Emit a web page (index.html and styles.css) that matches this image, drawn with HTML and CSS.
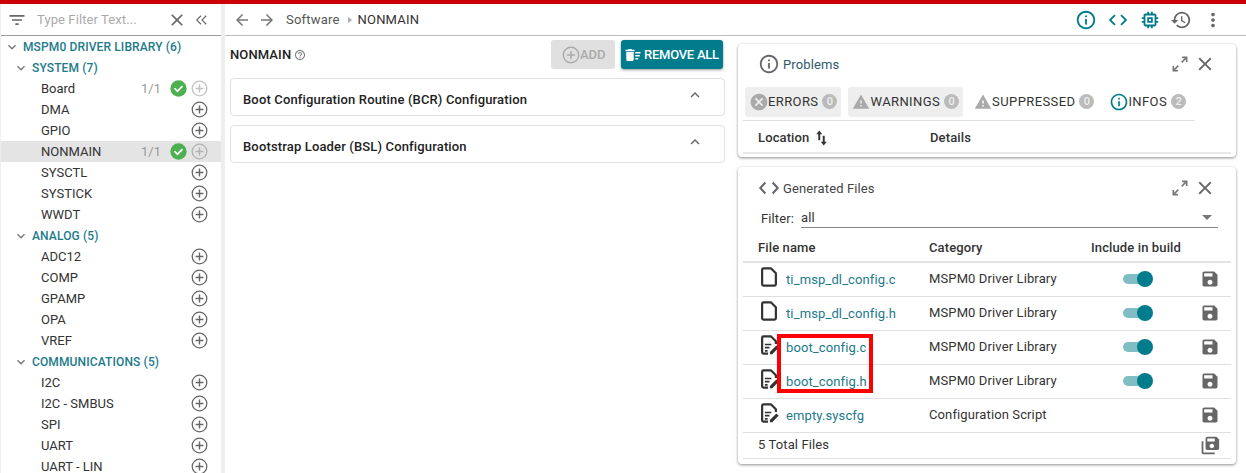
FILE: index.html
```html
<!DOCTYPE html>
<html lang="en">

<head>
    <meta charset="UTF-8">
    <title>SysConfig - NONMAIN</title>
    <link rel="stylesheet" href="styles.css">
</head>

<body>
    <svg class="defs" width="0" height="0">
        <symbol id="i-filter" viewBox="0 0 24 24"><path d="M10 18h4v-2h-4v2zM3 6v2h18V6H3zm3 7h12v-2H6v2z"/></symbol>
        <symbol id="i-close" viewBox="0 0 24 24"><path d="M19 6.41L17.59 5 12 10.59 6.41 5 5 6.41 10.59 12 5 17.59 6.41 19 12 13.41 17.59 19 19 17.59 13.41 12z"/></symbol>
        <symbol id="i-dleft" viewBox="0 0 24 24"><path d="M11 5.4L9.6 4 1.6 12l8 8 1.4-1.4L4.4 12zM20 5.4L18.6 4l-8 8 8 8 1.4-1.4L13.400 12z"/></symbol>
        <symbol id="i-more" viewBox="0 0 24 24"><path d="M16.59 8.59L12 13.17 7.41 8.59 6 10l6 6 6-6z"/></symbol>
        <symbol id="i-less" viewBox="0 0 24 24"><path d="M12 8l-6 6 1.41 1.41L12 10.83l4.59 4.58L18 14z"/></symbol>
        <symbol id="i-back" viewBox="0 0 24 24"><path d="M20 11H7.83l5.59-5.59L12 4l-8 8 8 8 1.41-1.41L7.83 13H20v-2z"/></symbol>
        <symbol id="i-fwd" viewBox="0 0 24 24"><path d="M12 4l-1.41 1.41L16.17 11H4v2h12.17l-5.58 5.59L12 20l8-8z"/></symbol>
        <symbol id="i-info" viewBox="0 0 24 24"><path d="M11 7h2v2h-2zm0 4h2v6h-2zm1-9C6.48 2 2 6.48 2 12s4.48 10 10 10 10-4.48 10-10S17.52 2 12 2zm0 18c-4.41 0-8-3.59-8-8s3.59-8 8-8 8 3.59 8 8-3.59 8-8 8z"/></symbol>
        <symbol id="i-code" viewBox="0 0 24 24"><path d="M9.4 16.6L4.800 12l4.600-4.600L8 6l-6 6 6 6 1.400-1.400zm5.200 0l4.600-4.600-4.600-4.600L16 6l6 6-6 6-1.400-1.400z"/></symbol>
        <symbol id="i-code2" viewBox="0 0 24 24"><path d="M8 6l-5.500 6L8 18M16 6l5.500 6L16 18" fill="none" stroke="currentColor" stroke-width="2.200"/></symbol>
        <symbol id="i-chip" viewBox="0 0 24 24"><path d="M15 9H9v6h6V9zm-2 4h-2v-2h2v2zm8-2V9h-2V7c0-1.100-.9-2-2-2h-2V3h-2v2h-2V3H9v2H7c-1.100 0-2 .9-2 2v2H3v2h2v2H3v2h2v2c0 1.100.9 2 2 2h2v2h2v-2h2v2h2v-2h2c1.100 0 2-.9 2-2v-2h2v-2h-2v-2h2zm-4 6H7V7h10v10z"/></symbol>
        <symbol id="i-history" viewBox="0 0 24 24"><path d="M13 3c-4.970 0-9 4.030-9 9H1l3.890 3.890.07.14L9 12H6c0-3.870 3.130-7 7-7s7 3.130 7 7-3.130 7-7 7c-1.930 0-3.680-.79-4.940-2.060l-1.420 1.420C8.270 19.990 10.510 21 13 21c4.970 0 9-4.030 9-9s-4.030-9-9-9zm-1 5v5l4.280 2.540.72-1.210-3.500-2.080V8H12z"/></symbol>
        <symbol id="i-dots" viewBox="0 0 24 24"><path d="M12 8c1.100 0 2-.9 2-2s-.9-2-2-2-2 .9-2 2 .9 2 2 2zm0 2c-1.100 0-2 .9-2 2s.9 2 2 2 2-.9 2-2-.9-2-2-2zm0 6c-1.100 0-2 .9-2 2s.9 2 2 2 2-.9 2-2-.9-2-2-2z"/></symbol>
        <symbol id="i-warn" viewBox="0 0 24 24"><path d="M1 21h22L12 2 1 21zm12-3h-2v-2h2v2zm0-4h-2v-4h2v4z"/></symbol>
        <symbol id="i-cancel" viewBox="0 0 24 24"><path d="M12 2C6.470 2 2 6.470 2 12s4.470 10 10 10 10-4.470 10-10S17.530 2 12 2zm5 13.590L15.590 17 12 13.410 8.410 17 7 15.590 10.590 12 7 8.410 8.410 7 12 10.590 15.590 7 17 8.410 13.410 12 17 15.590z"/></symbol>
        <symbol id="i-save" viewBox="0 0 24 24"><path d="M17 3H5c-1.110 0-2 .9-2 2v14c0 1.100.89 2 2 2h14c1.100 0 2-.9 2-2V7l-4-4zm-5 16c-1.660 0-3-1.340-3-3s1.340-3 3-3 3 1.340 3 3-1.340 3-3 3zm3-10H5V5h10v4z"/></symbol>
        <symbol id="i-saveall" viewBox="0 0 24 24"><path d="M20 2H9.500C8.400 2 7.500 2.900 7.500 4v11c0 1.100.9 2 2 2H21c1.100 0 2-.9 2-2V5l-3-3zm-5.300 13c-1.500 0-2.600-1.100-2.600-2.500s1.100-2.500 2.600-2.500 2.600 1.100 2.600 2.500-1.100 2.500-2.600 2.500zM18 7.500H9.500V4H18v3.500zM3 7v13c0 1.100.9 2 2 2h13v-2H5V7H3z"/></symbol>
        <symbol id="i-help" viewBox="0 0 24 24"><path d="M11 18h2v-2h-2v2zm1-16C6.480 2 2 6.480 2 12s4.480 10 10 10 10-4.480 10-10S17.520 2 12 2zm0 18c-4.410 0-8-3.590-8-8s3.590-8 8-8 8 3.590 8 8-3.590 8-8 8zm0-14c-2.210 0-4 1.790-4 4h2c0-1.100.9-2 2-2s2 .9 2 2c0 2-3 1.750-3 5h2c0-2.250 3-2.500 3-5 0-2.210-1.790-4-4-4z"/></symbol>
        <symbol id="i-sweep" viewBox="0 0 24 24"><path d="M15 16h4v2h-4zm0-8h7v2h-7zm0 4h6v2h-6zM3 18c0 1.100.9 2 2 2h6c1.100 0 2-.9 2-2V8H3v10zM14 5h-3l-1-1H6L5 5H2v2h12z"/></symbol>
        <symbol id="i-expand" viewBox="0 0 24 24"><path d="M14.500 3H21v6.500h-2V6.400l-4.300 4.300-1.400-1.400L17.600 5h-3.100zM9.500 21H3v-6.500h2v3.100l4.300-4.300 1.400 1.400L6.400 19h3.100z"/></symbol>
        <symbol id="i-sort" viewBox="0 0 24 24"><path d="M7 2l4 5H8.300v8H5.700V7H3zM13 22l-4-5h2.700V9h2.600v8H17z"/></symbol>
        <symbol id="i-plus" viewBox="0 0 24 24"><circle cx="12" cy="12" r="10.300" fill="none" stroke="currentColor" stroke-width="1.800"/><path d="M11 6.500h2V11h4.500v2H13v4.500h-2V13H6.500v-2H11z"/></symbol>
        <symbol id="i-ok" viewBox="0 0 24 24"><circle cx="12" cy="12" r="11.500"/><path d="M5.500 12.500l1.700-1.700 3.300 3.300 6.300-6.300 1.700 1.700-8 8z" fill="#fff"/></symbol>
        <symbol id="i-file" viewBox="0 0 24 24"><path d="M6 2.500h8l5.500 5.500v12a1.500 1.500 0 0 1-1.500 1.500H6A1.500 1.500 0 0 1 4.500 20V4A1.500 1.500 0 0 1 6 2.500z" fill="none" stroke="currentColor" stroke-width="2.400" stroke-linejoin="round"/></symbol>
        <symbol id="i-script" viewBox="0 0 24 24"><path d="M11 21.500H6A1.500 1.500 0 0 1 4.500 20V4A1.500 1.500 0 0 1 6 2.500h8l5.500 5.500v3" fill="none" stroke="currentColor" stroke-width="2.400" stroke-linejoin="round"/><path d="M7.500 10.500h7v1.800h-7zM7.500 14h5v1.800h-5zM7.500 17.500h3v1.800h-3zM13 22v-2.500l7-7 2.500 2.500-7 7z"/></symbol>
    </svg>

    <div class="redbar"></div>

    <div class="app">
        <aside class="sidebar">
            <div class="filter-bar">
                <svg class="ic ic-filter"><use href="#i-filter"/></svg>
                <span class="filter-text">Type Filter Text...</span>
                <svg class="ic ic-x"><use href="#i-close"/></svg>
                <svg class="ic ic-dleft"><use href="#i-dleft"/></svg>
            </div>
            <div class="tree">
                <div class="t-row t-root"><svg class="ic t-caret"><use href="#i-more"/></svg>MSPM0 DRIVER LIBRARY (6)</div>
                <div class="t-row t-group"><svg class="ic t-caret"><use href="#i-more"/></svg>SYSTEM (7)</div>
                <div class="t-row t-item"><span class="t-name">Board</span><span class="t-count">1/1</span><svg class="ic t-ok"><use href="#i-ok"/></svg><svg class="ic t-add off"><use href="#i-plus"/></svg></div>
                <div class="t-row t-item"><span class="t-name">DMA</span><svg class="ic t-add"><use href="#i-plus"/></svg></div>
                <div class="t-row t-item"><span class="t-name">GPIO</span><svg class="ic t-add"><use href="#i-plus"/></svg></div>
                <div class="t-row t-item active"><span class="t-name">NONMAIN</span><span class="t-count">1/1</span><svg class="ic t-ok"><use href="#i-ok"/></svg><svg class="ic t-add off"><use href="#i-plus"/></svg></div>
                <div class="t-row t-item"><span class="t-name">SYSCTL</span><svg class="ic t-add"><use href="#i-plus"/></svg></div>
                <div class="t-row t-item"><span class="t-name">SYSTICK</span><svg class="ic t-add"><use href="#i-plus"/></svg></div>
                <div class="t-row t-item"><span class="t-name">WWDT</span><svg class="ic t-add"><use href="#i-plus"/></svg></div>
                <div class="t-row t-group"><svg class="ic t-caret"><use href="#i-more"/></svg>ANALOG (5)</div>
                <div class="t-row t-item"><span class="t-name">ADC12</span><svg class="ic t-add"><use href="#i-plus"/></svg></div>
                <div class="t-row t-item"><span class="t-name">COMP</span><svg class="ic t-add"><use href="#i-plus"/></svg></div>
                <div class="t-row t-item"><span class="t-name">GPAMP</span><svg class="ic t-add"><use href="#i-plus"/></svg></div>
                <div class="t-row t-item"><span class="t-name">OPA</span><svg class="ic t-add"><use href="#i-plus"/></svg></div>
                <div class="t-row t-item"><span class="t-name">VREF</span><svg class="ic t-add"><use href="#i-plus"/></svg></div>
                <div class="t-row t-group"><svg class="ic t-caret"><use href="#i-more"/></svg>COMMUNICATIONS (5)</div>
                <div class="t-row t-item"><span class="t-name">I2C</span><svg class="ic t-add"><use href="#i-plus"/></svg></div>
                <div class="t-row t-item"><span class="t-name">I2C - SMBUS</span><svg class="ic t-add"><use href="#i-plus"/></svg></div>
                <div class="t-row t-item"><span class="t-name">SPI</span><svg class="ic t-add"><use href="#i-plus"/></svg></div>
                <div class="t-row t-item"><span class="t-name">UART</span><svg class="ic t-add"><use href="#i-plus"/></svg></div>
                <div class="t-row t-item"><span class="t-name">UART - LIN</span><svg class="ic t-add"><use href="#i-plus"/></svg></div>
            </div>
        </aside>

        <div class="main">
            <div class="toolbar">
                <svg class="ic nav"><use href="#i-back"/></svg>
                <svg class="ic nav nav2"><use href="#i-fwd"/></svg>
                <span class="crumb">Software</span>
                <span class="crumb-sep"></span>
                <span class="crumb cur">NONMAIN</span>
                <div class="tools">
                    <svg class="ic tool on"><use href="#i-info"/></svg>
                    <svg class="ic tool on"><use href="#i-code"/></svg>
                    <svg class="ic tool on"><use href="#i-chip"/></svg>
                    <svg class="ic tool"><use href="#i-history"/></svg>
                    <svg class="ic tool"><use href="#i-dots"/></svg>
                </div>
            </div>

            <div class="panes">
                <section class="config">
                    <div class="config-head">
                        <h2>NONMAIN</h2>
                        <svg class="ic ic-help"><use href="#i-help"/></svg>
                        <button class="btn btn-add"><svg class="ic"><use href="#i-plus"/></svg>ADD</button>
                        <button class="btn btn-remove"><svg class="ic"><use href="#i-sweep"/></svg>REMOVE ALL</button>
                    </div>
                    <div class="accordion"><span>Boot Configuration Routine (BCR) Configuration</span><svg class="ic"><use href="#i-less"/></svg></div>
                    <div class="accordion"><span>Bootstrap Loader (BSL) Configuration</span><svg class="ic"><use href="#i-less"/></svg></div>
                </section>

                <section class="side">
                    <div class="card problems">
                        <div class="card-title">
                            <svg class="ic ic-title"><use href="#i-info"/></svg>
                            <span class="title-blue">Problems</span>
                            <svg class="ic ic-exp"><use href="#i-expand"/></svg>
                            <svg class="ic ic-cl"><use href="#i-close"/></svg>
                        </div>
                        <div class="chips">
                            <div class="chip sel"><svg class="ic ic-round"><use href="#i-cancel"/></svg>ERRORS<b>0</b></div>
                            <div class="chip sel"><svg class="ic ic-tri"><use href="#i-warn"/></svg>WARNINGS<b>0</b></div>
                            <div class="chip"><svg class="ic ic-tri"><use href="#i-warn"/></svg>SUPPRESSED<b>0</b></div>
                            <div class="chip infos"><svg class="ic ic-round"><use href="#i-info"/></svg>INFOS<b>2</b></div>
                        </div>
                        <div class="prob-head">
                            <span class="col-loc">Location<svg class="ic ic-sort"><use href="#i-sort"/></svg></span>
                            <span>Details</span>
                        </div>
                    </div>

                    <div class="card files">
                        <div class="card-title">
                            <svg class="ic ic-title2"><use href="#i-code2"/></svg>
                            <span>Generated Files</span>
                            <svg class="ic ic-exp"><use href="#i-expand"/></svg>
                            <svg class="ic ic-cl"><use href="#i-close"/></svg>
                        </div>
                        <div class="filter-row">
                            <span>Filter:</span>
                            <div class="select"><span>all</span><i class="select-arrow"></i></div>
                        </div>
                        <div class="f-row f-head">
                            <span>File name</span><span>Category</span><span>Include in build</span>
                        </div>
                        <div class="f-row">
                            <a class="f-name"><svg class="ic f-ic"><use href="#i-file"/></svg>ti_msp_dl_config.c</a>
                            <span>MSPM0 Driver Library</span>
                            <span class="toggle"></span>
                            <svg class="ic f-save"><use href="#i-save"/></svg>
                        </div>
                        <div class="f-row">
                            <a class="f-name"><svg class="ic f-ic"><use href="#i-file"/></svg>ti_msp_dl_config.h</a>
                            <span>MSPM0 Driver Library</span>
                            <span class="toggle"></span>
                            <svg class="ic f-save"><use href="#i-save"/></svg>
                        </div>
                        <div class="f-row">
                            <a class="f-name"><svg class="ic f-ic"><use href="#i-script"/></svg>boot_config.c</a>
                            <span>MSPM0 Driver Library</span>
                            <span class="toggle"></span>
                            <svg class="ic f-save"><use href="#i-save"/></svg>
                        </div>
                        <div class="f-row">
                            <a class="f-name"><svg class="ic f-ic"><use href="#i-script"/></svg>boot_config.h</a>
                            <span>MSPM0 Driver Library</span>
                            <span class="toggle"></span>
                            <svg class="ic f-save"><use href="#i-save"/></svg>
                        </div>
                        <div class="f-row">
                            <a class="f-name"><svg class="ic f-ic"><use href="#i-script"/></svg>empty.syscfg</a>
                            <span>Configuration Script</span>
                            <span></span>
                            <svg class="ic f-save"><use href="#i-save"/></svg>
                        </div>
                        <div class="f-total">
                            <span>5 Total Files</span>
                            <svg class="ic f-saveall"><use href="#i-saveall"/></svg>
                        </div>
                        <div class="callout"></div>
                    </div>
                </section>
            </div>
        </div>
    </div>
</body>

</html>
```

FILE: styles.css
```css
* {
    box-sizing: border-box;
}

html,
body {
    height: 473px;
    margin: 0;
    overflow: hidden;
}

body {
    background-color: #fff;
    color: #333;
    font-family: Roboto, "Liberation Sans", sans-serif;
    font-size: 13px;
    letter-spacing: .12px;
}

.defs {
    position: absolute;
}

.ic {
    display: block;
    flex: none;
    width: 18px;
    height: 18px;
    fill: currentColor;
}

.redbar {
    height: 4px;
    background-color: #cc0000;
}

.app {
    display: flex;
    height: 469px;
}

/* left tree */
.sidebar {
    flex: none;
    overflow: hidden;
    border-left: 1px solid #eee;
    border-right: 4px solid #eee;
    width: 225px;
    letter-spacing: 0;
}

.filter-bar {
    display: flex;
    align-items: center;
    height: 32px;
    border-bottom: 1px solid #9e9e9e;
    color: #666;
}

.ic-filter {
    width: 20px;
    height: 20px;
    margin-left: 6px;
}

.filter-text {
    margin-left: 10px;
    width: 130px;
    color: #aaa;
    letter-spacing: .1px;
}

.ic-x {
    width: 20px;
    height: 20px;
}

.ic-dleft {
    width: 14px;
    height: 14px;
    margin-left: 8px;
}

.t-row {
    display: flex;
    align-items: center;
    height: 21px;
}

.t-root,
.t-group {
    color: #217a8b;
    font-weight: 500;
    font-size: 12px;
    letter-spacing: .13px;
}

.t-caret {
    width: 16px;
    height: 16px;
    color: #777;
}

.t-root {
    padding-left: 3px;
}

.t-root .t-caret {
    margin-right: 3px;
}

.t-group {
    padding-left: 12px;
}

.t-group .t-caret {
    margin-right: 3px;
}

.t-item {
    padding-left: 40px;
}

.t-item.active {
    background-color: #e4e4e4;
}

.t-name {
    flex: 1;
}

.t-count {
    color: #999;
    margin-right: 9px;
}

.t-ok {
    width: 17px;
    height: 17px;
    color: #4caf50;
    margin-right: 4px;
}

.t-add {
    width: 17px;
    height: 17px;
    color: #666;
    margin-right: 13px;
}

.t-add.off {
    opacity: .4;
}

/* right side */
.main {
    flex: 1;
    min-width: 0;
}

.toolbar {
    display: flex;
    align-items: center;
    height: 32px;
    border-bottom: 1px solid #bdbdbd;
    padding-left: 8px;
}

.nav {
    color: #777;
    width: 18px;
    height: 18px;
}

.nav2 {
    margin-left: 7px;
}

.crumb {
    margin-left: 10px;
    color: #555;
    letter-spacing: .2px;
}

.crumb.cur {
    margin-left: 6px;
    color: #333;
}

.crumb-sep {
    margin-left: 8px;
    border-left: 4px solid #aaa;
    border-top: 3px solid transparent;
    border-bottom: 3px solid transparent;
}

.tools {
    display: flex;
    align-items: center;
    margin-left: auto;
    gap: 9.700px;
    margin-right: 22px;
}

.tool {
    width: 22px;
    height: 22px;
    color: #666;
}

.tool.on {
    color: #007c8c;
}

.panes {
    display: flex;
}

.config {
    width: 509px;
    padding-left: 5px;
}

.config-head {
    display: flex;
    align-items: center;
    height: 29px;
    margin-top: 4px;
    margin-right: 9px;
}

.config-head h2 {
    margin: 0;
    font-size: 13px;
    font-weight: 500;
    color: #222;
}

.ic-help {
    width: 12px;
    height: 12px;
    margin-left: 3px;
    color: #777;
}

.btn {
    display: flex;
    align-items: center;
    height: 29px;
    border: 0;
    border-radius: 3px;
    font: 500 13px Roboto, sans-serif;
    padding: 0;
}

.btn-add {
    width: 64px;
    margin-left: auto;
    padding-left: 11px;
    background-color: #e0e0e0;
    color: #aaa;
}

.btn-remove {
    width: 102px;
    margin-left: 6px;
    margin-right: 2px;
    padding-left: 3px;
    background-color: #007c8c;
    color: #fff;
    letter-spacing: -.25px;
    box-shadow: 0 1px 3px rgba(0, 0, 0, .4);
}

.btn-remove .ic {
    margin-right: 2px;
}

.accordion {
    display: flex;
    align-items: center;
    justify-content: space-between;
    width: 495px;
    height: 38px;
    margin-top: 9px;
    padding: 0 20px 0 12px;
    border: 1px solid #e0e0e0;
    border-radius: 4px;
    font-weight: 500;
    color: #222;
}

.accordion span {
    padding-top: 4px;
    letter-spacing: .15px;
}

.accordion .ic {
    color: #666;
    margin-top: -4px;
}

.side {
    flex: 1;
    padding: 8px 10px 0 4px;
}

.card {
    position: relative;
    background-color: #fff;
    border-radius: 4px;
    box-shadow: 0 1px 3px rgba(0, 0, 0, .45);
    padding: 0 5px;
}

.problems {
    height: 113px;
}

.files {
    height: 297px;
    margin-top: 10px;
}

.card-title {
    display: flex;
    align-items: center;
    height: 40px;
    padding-left: 15px;
    padding-right: 15px;
    color: #444;
}

.files .card-title {
    padding-top: 2px;
}

.title-blue {
    color: #2c5a6b;
}

.ic-title {
    width: 22px;
    height: 22px;
    color: #666;
    margin-right: 3px;
}

.ic-title2 {
    width: 22px;
    height: 22px;
    color: #666;
    margin-right: 3px;
}

.ic-exp {
    width: 20px;
    height: 20px;
    margin-left: auto;
    color: #777;
}

.ic-cl {
    width: 22px;
    height: 22px;
    margin-left: 4px;
    color: #666;
}

.chips {
    display: flex;
    gap: 7px;
    width: 452px;
    margin-top: 3px;
    padding: 0 0 3px 2px;
    border-bottom: 1px solid #e0e0e0;
}

.chip {
    display: flex;
    align-items: center;
    height: 30px;
    padding: 0 4px 1px;
    border-radius: 3px;
    letter-spacing: .4px;
    color: #333;
}

.chip.sel {
    background-color: #eee;
}

.chip .ic {
    color: #aaa;
}

.chip .ic-round {
    width: 20px;
    height: 20px;
    margin-right: -1px;
}

.chip .ic-tri {
    width: 18px;
    height: 18px;
}

.chip.infos .ic {
    color: #007c8c;
}

.chip b {
    display: block;
    width: 15px;
    height: 15px;
    margin-left: 4px;
    border-radius: 50%;
    background-color: #bbb;
    color: #eee;
    font-size: 11px;
    font-weight: 500;
    line-height: 15px;
    text-align: center;
    letter-spacing: 0;
}

.prob-head {
    display: grid;
    grid-template-columns: 172px 1fr;
    align-items: center;
    height: 33px;
    padding-left: 15px;
    padding-top: 2px;
    border-bottom: 2px solid #e8e8e8;
    font-weight: 500;
}

.col-loc {
    display: flex;
    align-items: center;
}

.ic-sort {
    width: 18px;
    height: 18px;
    margin-left: 5px;
    color: #333;
}

.filter-row {
    display: flex;
    align-items: center;
    height: 20px;
    margin-top: 1px;
    padding-left: 18px;
}

.select {
    display: flex;
    justify-content: space-between;
    align-items: center;
    flex: 1;
    height: 20px;
    margin: 0 13px 0 7px;
    padding-right: 6px;
    border-bottom: 1px solid #888;
}

.select-arrow {
    border-top: 5px solid #777;
    border-left: 5px solid transparent;
    border-right: 5px solid transparent;
}

.f-row {
    display: grid;
    grid-template-columns: 171px 162px 1fr 20px;
    align-items: center;
    height: 34px;
    border-bottom: 1px solid #e0e0e0;
    padding: 0 11px 2px 15px;
}

.f-head {
    height: 35px;
    padding-top: 6px;
    padding-bottom: 0;
    font-weight: 500;
    grid-template-columns: 171px 162px 1fr;
    border-bottom: 2px solid #e4e4e4;
}

.f-name {
    display: flex;
    align-items: center;
    padding-top: 2px;
    color: #217a8b;
    margin-left: -15px;
}

.f-ic {
    width: 22px;
    height: 22px;
    margin-left: 15px;
    margin-right: 6px;
    margin-top: -6px;
    color: #333;
}

.toggle {
    position: relative;
    display: block;
    justify-self: start;
    width: 26px;
    height: 10px;
    margin-left: 32px;
    border-radius: 5px;
    background-color: #80bdc5;
}

.toggle::after {
    content: "";
    position: absolute;
    top: -3px;
    right: -4px;
    width: 16px;
    height: 16px;
    border-radius: 50%;
    background-color: #007c8c;
}

.f-save {
    width: 20px;
    height: 20px;
    color: #666;
}

.f-total {
    display: flex;
    align-items: center;
    justify-content: space-between;
    height: 26px;
    padding: 0 11px 2px 15px;
    border-bottom: 1px solid #e0e0e0;
}

.f-saveall {
    width: 21px;
    height: 21px;
    margin-top: 2px;
    color: #666;
}

/* red annotation over the two boot_config rows */
.callout {
    position: absolute;
    left: 39px;
    top: 167px;
    width: 96px;
    height: 59px;
    border: 4px solid #ff0000;
}
```
